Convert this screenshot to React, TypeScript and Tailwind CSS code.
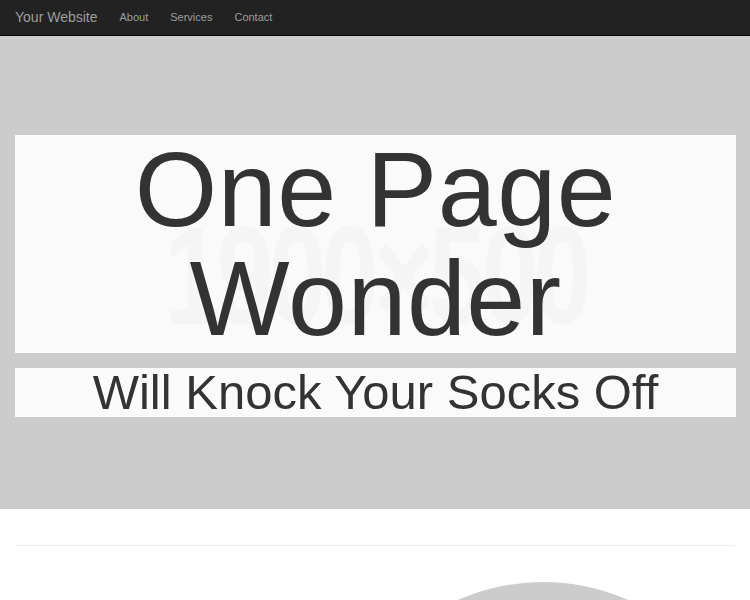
export default function App() {
  const links = ['About', 'Services', 'Contact'];

  return (
    <div className="min-h-screen overflow-hidden bg-white font-['Liberation_Sans',Arial,sans-serif] text-[#333]">
      {/* navbar */}
      <nav className="h-[36px] bg-[#222] border-b border-[#080808] flex items-center px-[15px]">
        <span className="text-[14px] text-[#9d9d9d] mr-[22px]">Your Website</span>
        <ul className="flex gap-[22px]">
          {links.map(l => (
            <li key={l} className="text-[11px] text-[#9d9d9d]">{l}</li>
          ))}
        </ul>
      </nav>

      {/* hero, a placeholder image with the headline over it */}
      <header className="relative h-[473px] bg-[#ccc] pl-[15px] pr-[14px] pt-[99px]">
        <div className="absolute inset-0 flex items-center justify-center pointer-events-none">
          <span className="font-['Liberation_Sans_Narrow','Liberation_Sans',sans-serif] font-bold text-[140px] leading-none tracking-[-6px] text-[#969696] scale-x-[0.73] translate-y-[3px]">
            1900×500
          </span>
        </div>
        <div className="relative flex flex-col gap-[15px]">
          <h1 className="bg-white/90 text-center text-[106px] leading-[109px] tracking-[0.5px] text-[#333]">
            One Page
            <br />
            Wonder
          </h1>
          <h2 className="bg-white/90 text-center text-[49px] leading-[49px] text-[#333]">
            Will Knock Your Socks Off
          </h2>
        </div>
      </header>

      {/* featurette */}
      <section className="px-[15px] pt-[36px]">
        <hr className="border-t border-[#eee]" />
        <div className="pt-[36px]">
          <div className="ml-[318px] w-[420px] h-[420px] rounded-full bg-[#ccc]" />
        </div>
      </section>
    </div>
  );
}
